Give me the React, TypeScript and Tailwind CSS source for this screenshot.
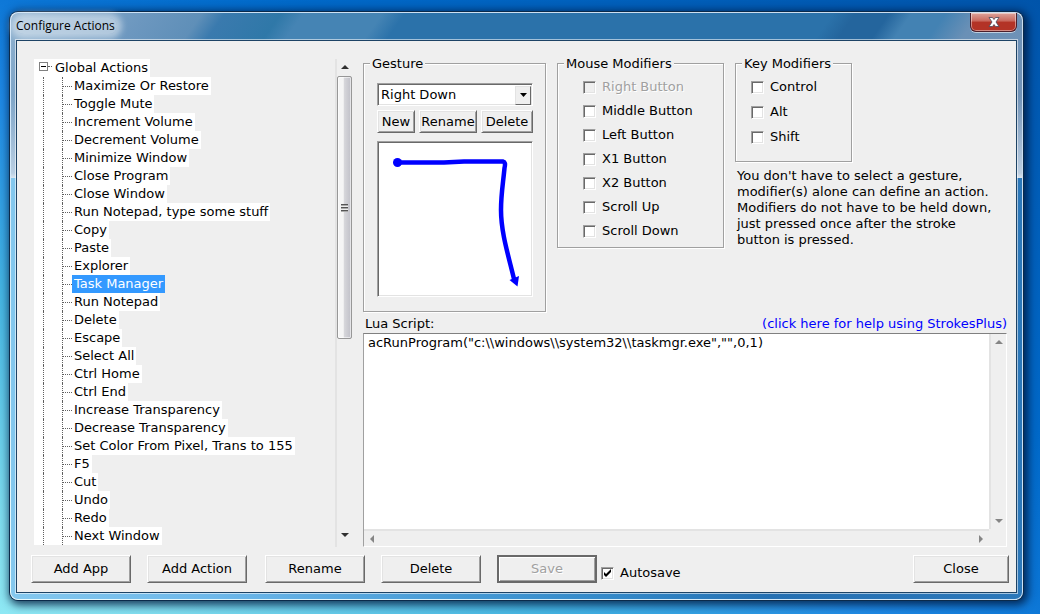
import { useState } from 'react';

const ACTIONS = [
  'Maximize Or Restore',
  'Toggle Mute',
  'Increment Volume',
  'Decrement Volume',
  'Minimize Window',
  'Close Program',
  'Close Window',
  'Run Notepad, type some stuff',
  'Copy',
  'Paste',
  'Explorer',
  'Task Manager',
  'Run Notepad',
  'Delete',
  'Escape',
  'Select All',
  'Ctrl Home',
  'Ctrl End',
  'Increase Transparency',
  'Decrease Transparency',
  'Set Color From Pixel, Trans to 155',
  'F5',
  'Cut',
  'Undo',
  'Redo',
  'Next Window',
];

const MOUSE_MODIFIERS = [
  'Right Button',
  'Middle Button',
  'Left Button',
  'X1 Button',
  'X2 Button',
  'Scroll Up',
  'Scroll Down',
];

const ARROWS = {
  up: 'M0 6L4 2L8 6Z',
  down: 'M0 2L4 6L8 2Z',
  left: 'M6 0L2 4L6 8Z',
  right: 'M2 0L6 4L2 8Z',
};

function ScrollArrow({ direction, muted = false }: { direction: keyof typeof ARROWS; muted?: boolean }) {
  return (
    <button
      type="button"
      aria-label={`Scroll ${direction}`}
      className={`flex size-4 shrink-0 items-center justify-center ${muted ? 'text-[#858585]' : 'text-[#303030]'}`}
    >
      <svg viewBox="0 0 8 8" className="size-2" fill="currentColor" aria-hidden="true">
        <path d={ARROWS[direction]} />
      </svg>
    </button>
  );
}

type PushButtonProps = {
  label: string;
  size?: string;
  disabled?: boolean;
};

function PushButton({ label, size = 'h-7 w-[100px]', disabled = false }: PushButtonProps) {
  const edge = disabled
    ? 'border-2 border-[#696969] text-[#a0a0a0] [text-shadow:1px_1px_0_#fff] shadow-[inset_1px_1px_0_#fff,inset_-1px_-1px_0_#a0a0a0]'
    : 'border border-t-white border-l-white border-r-[#696969] border-b-[#696969] shadow-[inset_1px_1px_0_#e3e3e3,inset_-1px_-1px_0_#a0a0a0]';
  return (
    <button type="button" disabled={disabled} className={`shrink-0 bg-[#efefef] ${edge} ${size}`}>
      {label}
    </button>
  );
}

type CheckProps = {
  label: string;
  defaultChecked?: boolean;
  disabled?: boolean;
};

function Check({ label, defaultChecked = false, disabled = false }: CheckProps) {
  return (
    <label
      className={`flex items-center gap-1.5 leading-4 ${disabled ? 'text-[#a0a0a0] [text-shadow:1px_1px_0_#fff]' : ''}`}
    >
      <span className="grid size-[13px] shrink-0">
        <input
          type="checkbox"
          defaultChecked={defaultChecked}
          disabled={disabled}
          className="peer col-start-1 row-start-1 size-[13px] appearance-none border border-t-[#a0a0a0] border-r-white border-b-white border-l-[#a0a0a0] bg-white shadow-[inset_1px_1px_0_#696969,inset_-1px_-1px_0_#e3e3e3] disabled:bg-[#efefef]"
        />
        <svg
          viewBox="0 0 13 13"
          className="pointer-events-none invisible col-start-1 row-start-1 size-[13px] peer-checked:visible"
          aria-hidden="true"
        >
          <path d="M3 5v3l2 2l5 -5v-3l-5 5z" />
        </svg>
      </span>
      {label}
    </label>
  );
}

function Group({ title, className, children }: { title: string; className: string; children: React.ReactNode }) {
  return (
    <fieldset className={`shrink-0 border border-[#a0a0a0] shadow-[1px_1px_0_#fff,inset_1px_1px_0_#fff] ${className}`}>
      <legend className="ml-1.5 bg-[#efefef] px-0.5 leading-[15px]">{title}</legend>
      {children}
    </fieldset>
  );
}

function ActionTree() {
  const [selected, setSelected] = useState('Task Manager');

  return (
    <div className="mt-[3px] flex w-[318px] shrink-0">
      <div className="min-w-0 flex-1 overflow-hidden leading-[18px]">
        <div className="flex w-fit bg-white pr-0.5">
          <button
            type="button"
            aria-label="Collapse Global Actions"
            className="mt-[3px] ml-[5px] flex size-[9px] items-center justify-center border border-[#808080]"
          >
            <span className="h-px w-[5px] bg-black" />
          </button>
          <span className="mt-[7px] mr-[3px] w-1 self-start border-t border-dotted border-[#606060]" />
          Global Actions
        </div>
        <ul className="bg-[linear-gradient(#fff,#fff)] bg-[length:28px_100%] bg-no-repeat">
          {ACTIONS.map((action) => (
            <li key={action} className="flex">
              <span className="ml-[9px] w-[19px] shrink-0 border-l border-dotted border-[#606060]" />
              <span className="flex w-2.5 shrink-0 items-center border-l border-dotted border-[#606060] bg-white">
                <span className="w-full border-t border-dotted border-[#606060]" />
              </span>
              <button
                type="button"
                onClick={() => setSelected(action)}
                className={`h-[18px] px-0.5 whitespace-nowrap ${action === selected ? 'bg-[#3399ff] text-white' : 'bg-white'}`}
              >
                {action}
              </button>
            </li>
          ))}
        </ul>
      </div>
      <div className="flex w-[17px] shrink-0 flex-col items-center border-l-2 border-[#e3e3e3] pb-1">
        <ScrollArrow direction="up" />
        <div className="mt-px flex h-[263px] w-[15px] items-center justify-center rounded-xs border border-[#979797] bg-linear-to-r from-[#f5f5f5] from-40% via-[#d6d6da] via-50% to-[#c0c0c8] shadow-[inset_0_0_0_1px_#ffffff90]">
          <span className="h-2 w-[7px] bg-[repeating-linear-gradient(#555_0_1px,#aaa_1px_2px,#eee_2px_3px)]" />
        </div>
        <div className="flex-1" />
        <ScrollArrow direction="down" />
      </div>
    </div>
  );
}

function GestureGroup() {
  return (
    <Group title="Gesture" className="w-[183px] pb-3.5">
      <div className="mt-3 ml-[13px] flex w-[156px] flex-col">
        <span className="grid h-[23px] grid-cols-[1fr_16px] items-center border border-t-[#a0a0a0] border-r-white border-b-white border-l-[#a0a0a0] bg-white p-px shadow-[inset_1px_1px_0_#696969,inset_-1px_-1px_0_#e3e3e3]">
          <select
            aria-label="Gesture"
            className="col-span-2 col-start-1 row-start-1 h-5 appearance-none bg-transparent pl-0.5 leading-5"
          >
            <option>Right Down</option>
          </select>
          <span className="pointer-events-none col-start-2 row-start-1 flex h-[19px] items-center justify-center border border-t-[#e3e3e3] border-r-[#696969] border-b-[#696969] border-l-[#e3e3e3] bg-[#efefef]">
            <svg viewBox="0 0 7 4" className="h-1 w-[7px]" aria-hidden="true">
              <path d="M0 0H7L3.5 4Z" />
            </svg>
          </span>
        </span>
        <div className="mt-1 flex justify-between">
          <PushButton label="New" size="h-[23px] w-[38px]" />
          <PushButton label="Rename" size="h-[23px] w-[58px]" />
          <PushButton label="Delete" size="h-[23px] w-[52px]" />
        </div>
        <div className="mt-2 size-[156px] border border-t-[#a0a0a0] border-r-white border-b-white border-l-[#a0a0a0] bg-white shadow-[inset_1px_1px_0_#696969,inset_-1px_-1px_0_#e3e3e3]">
          <svg viewBox="0 0 154 154" role="img" aria-label="Right Down gesture" className="size-full">
            <circle cx="19.5" cy="20.5" r="4.5" fill="#0000ff" />
            <path
              d="M19 20.5H66L86 19.5H125Q128 20 126.500 26C125 42 123 52 123 68C123 90 130 112 136 137"
              fill="none"
              stroke="#0000ff"
              strokeWidth="4.5"
              strokeLinejoin="round"
            />
            <path d="M131.500 138L141 134L139.500 144.500Z" fill="#0000ff" />
          </svg>
        </div>
      </div>
    </Group>
  );
}

function ScriptEditor() {
  return (
    <div className="flex min-h-0 flex-1 flex-col">
      <div className="flex justify-between leading-4">
        <label htmlFor="script" className="ml-0.5">
          Lua Script:
        </label>
        <a href="#help" className="text-[#0000ff]">
          (click here for help using StrokesPlus)
        </a>
      </div>
      <div className="mt-px grid flex-1 grid-cols-[1fr_17px] grid-rows-[1fr_17px] border border-t-[#808080] border-r-white border-b-white border-l-[#a0a0a0]">
        <textarea
          id="script"
          wrap="off"
          spellCheck={false}
          defaultValue={'acRunProgram("c:\\\\windows\\\\system32\\\\taskmgr.exe","",0,1)'}
          className="resize-none overflow-hidden bg-white px-1 pt-px leading-4 outline-none"
        />
        <div className="flex flex-col justify-between border-l-2 border-[#e3e3e3]">
          <ScrollArrow direction="up" muted />
          <ScrollArrow direction="down" muted />
        </div>
        <div className="flex items-center justify-between border-t-2 border-[#e3e3e3]">
          <ScrollArrow direction="left" muted />
          <ScrollArrow direction="right" muted />
        </div>
      </div>
    </div>
  );
}

function TitleBar() {
  return (
    <header className="flex h-[27px] items-start justify-between">
      <h1 className="mt-[5px] rounded-full bg-white/45 pr-0.5 font-['Open_Sans','Noto_Sans',sans-serif] text-xs leading-4 shadow-[0_0_6px_5px_#ffffff73]">
        Configure Actions
      </h1>
      <button
        type="button"
        aria-label="Close window"
        className="flex h-[19px] w-[47px] items-center justify-center rounded-b-md border border-t-0 border-[#4c1f2b] bg-linear-to-b from-[#dda39b] via-[#c8665b] via-45% to-[#b33326] to-50% shadow-[inset_0_0_0_1px_#ffffff70,0_1px_0_#ffffff90]"
      >
        <svg viewBox="0 0 12 10" className="h-2.5 w-3" aria-hidden="true">
          <path
            d="M1 .5H4.500L6 2.500L7.500 .5H11L8 5L11 9.500H7.500L6 7.500L4.500 9.500H1L4 5Z"
            fill="#fff"
            stroke="#4a4658"
            strokeWidth=".8"
          />
        </svg>
      </button>
    </header>
  );
}

// Glass frame layers: pale fade down the sides, streaked title bar, then the lower frame.
const FRAME_GLASS =
  'bg-[linear-gradient(to_bottom,transparent_50%,#dbe7f2b0_97%,#ffffffc0_100%),linear-gradient(125deg,#8fb2d0_0%,#6c97bf_12%,#5f8fb8_17%,#3a7aae_19%,#2f78a8_24%,#4584b4_26%,#4584b4_33%,#2b72aa_35%,#2b72aa_73%,#24659d_75%,#24659d_78%,#4382b3_80%,#4382b3_83%,#6a90b6_86%,#7594b8_100%),linear-gradient(to_right,#84c8ee_0%,#6db8ea_20%,#4499d4_45%,#3288c8_60%,#2570b2_75%,#2c78ba_100%)] bg-[length:100%_165px,100%_165px,100%_100%] bg-no-repeat';

export default function App() {
  return (
    <div className="flex min-h-screen flex-col bg-[linear-gradient(to_top_right,#8ee8f4_0%,#7edcee_8%,#45b5e2_26%,#1e88e4_42%,#0a74d4_52%,#0068c8_65%,#0054aa_100%)] pt-3 pr-[17px] pb-3.5 pl-2.5 font-['DejaVu_Sans',Verdana,sans-serif] text-[13px] text-black">
      <div
        className={`flex flex-1 flex-col rounded-lg border border-white/80 px-[5px] pb-[6px] shadow-[0_0_0_1px_#0b2a4a,2px_2px_9px_3px_#00173acc] ${FRAME_GLASS}`}
      >
        <TitleBar />
        <main className="flex flex-1 flex-col border border-[#1d4365] bg-[#efefef] pr-[9px] pb-[9px] pl-[17px] shadow-[0_0_0_1px_#ffffff90]">
          <div className="flex flex-1 gap-[11px] pt-[15px]">
            <ActionTree />
            <div className="flex min-w-0 flex-1 flex-col">
              <div className="flex items-start gap-[11px]">
                <GestureGroup />
                <Group title="Mouse Modifiers" className="w-[167px] pb-2">
                  <div className="mt-2 ml-[25px] flex flex-col gap-2">
                    {MOUSE_MODIFIERS.map((name) => (
                      <Check key={name} label={name} disabled={name === 'Right Button'} />
                    ))}
                  </div>
                </Group>
                <div className="min-w-0 flex-1">
                  <Group title="Key Modifiers" className="w-[117px] pb-4">
                    <div className="mt-2 ml-[15px] flex flex-col gap-[9px]">
                      <Check label="Control" />
                      <Check label="Alt" />
                      <Check label="Shift" />
                    </div>
                  </Group>
                  <p className="mt-1.5 max-w-[264px] pl-0.5 leading-4">
                    You don't have to select a gesture, modifier(s) alone can define an action. Modifiers do not have
                    to be held down, just pressed once after the stroke button is pressed.
                  </p>
                </div>
              </div>
              <div className="mt-1 flex flex-1 flex-col">
                <ScriptEditor />
              </div>
            </div>
          </div>
          <div className="mt-2 -mr-0.5 -ml-[3px] flex items-center justify-between">
            <div className="flex gap-[18px]">
              <div className="flex gap-4">
                <PushButton label="Add App" />
                <PushButton label="Add Action" />
              </div>
              <div className="flex gap-4">
                <PushButton label="Rename" />
                <PushButton label="Delete" />
                <div className="flex items-center gap-1">
                  <PushButton label="Save" disabled />
                  <div className="pt-2">
                    <Check label="Autosave" defaultChecked />
                  </div>
                </div>
              </div>
            </div>
            <PushButton label="Close" size="h-7 w-24" />
          </div>
        </main>
      </div>
    </div>
  );
}
